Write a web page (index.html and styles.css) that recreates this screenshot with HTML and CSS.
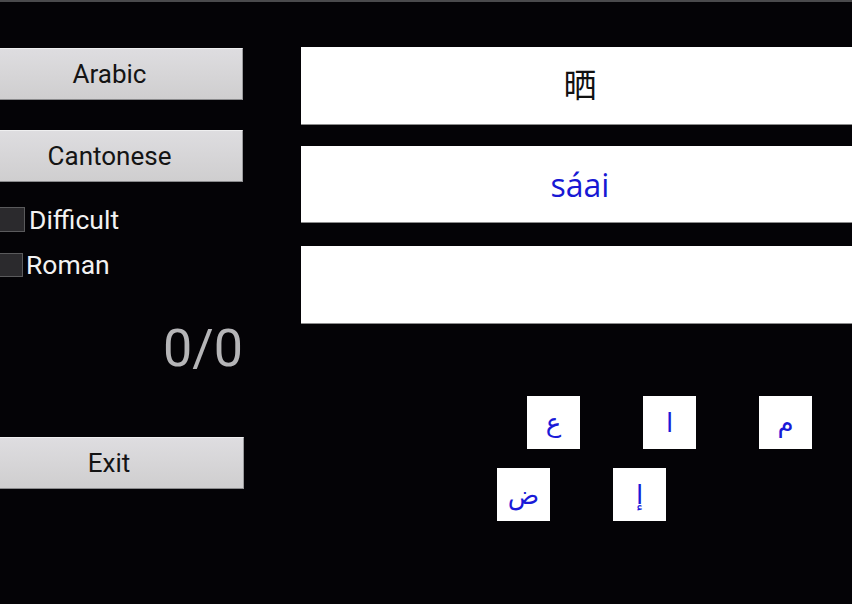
FILE: index.html
```html
<!DOCTYPE html>
<html>
<head>
<meta charset="utf-8">
<link rel="stylesheet" href="styles.css">
</head>
<body>
<div class="app">
  <div class="left">
    <div class="btn btn-arabic">Arabic</div>
    <div class="btn btn-canto">Cantonese</div>
    <div class="check check-diff"><span class="box"></span><span class="label">Difficult</span></div>
    <div class="check check-roman"><span class="box box-small"></span><span class="label">Roman</span></div>
    <div class="score">0/0</div>
    <div class="btn btn-exit">Exit</div>
  </div>
  <div class="right">
    <div class="card card-1"><span class="hanzi">晒</span></div>
    <div class="card card-2"><span class="roman">sáai</span></div>
    <div class="card card-3"></div>
    <div class="tiles">
      <div class="tile-row row-1">
        <div class="tile" dir="rtl">ع</div>
        <div class="tile" dir="rtl">ا</div>
        <div class="tile" dir="rtl">م</div>
      </div>
      <div class="tile-row row-2">
        <div class="tile" dir="rtl">ض</div>
        <div class="tile" dir="rtl">إ</div>
      </div>
    </div>
  </div>
</div>
</body>
</html>
```
FILE: styles.css
```css
html, body {
  margin: 0;
  padding: 0;
  background: #040306;
  width: 852px;
  height: 604px;
  overflow: hidden;
}
.app {
  display: flex;
  border-top: 2px solid #4a4a4c;
  height: 602px;
  font-family: Roboto, "Liberation Sans", sans-serif;
}
.left {
  width: 244px;
  display: flex;
  flex-direction: column;
}
.btn {
  box-sizing: border-box;
  height: 52px;
  margin-left: -23px;
  background: linear-gradient(#dedde0, #cfcecf);
  border-top: 1px solid #efeff0;
  border-bottom: 1px solid #8a8a8c;
  border-right: 1px solid #9a9a9c;
  color: #141414;
  font-size: 26px;
  display: flex;
  align-items: center;
  justify-content: center;
}
.btn-arabic { margin-top: 46px; width: 266px; }
.btn-canto { margin-top: 30px; width: 266px; }
.btn-exit { margin-top: 46px; width: 269px; margin-left: -25px; }
.check {
  display: flex;
  align-items: center;
  color: #f2f2f2;
  font-size: 26.5px;
}
.check-diff { margin-top: 25px; height: 25px; }
.check-roman { margin-top: 20px; height: 25px; }
.box {
  box-sizing: border-box;
  width: 25px;
  height: 25px;
  background: #2b2a2d;
  border: 1px solid #5a5a5c;
  border-left: none;
  margin-right: 4px;
}
.box-small { width: 23px; height: 24px; margin-right: 3px; }
.score {
  margin-top: 42px;
  height: 72px;
  text-align: right;
  color: #b5b5b7;
  font-size: 52px;
  line-height: 60px;
  padding-right: 1px;
}
.right {
  margin-left: 57px;
  margin-right: -7px;
  flex: 1;
  display: flex;
  flex-direction: column;
}
.card {
  background: #ffffff;
  border-bottom: 1px solid #8c8c8c;
  display: flex;
  align-items: center;
  justify-content: center;
}
.card-1 { margin-top: 45px; height: 77px; }
.card-2 { margin-top: 21px; height: 76px; }
.card-3 { margin-top: 23px; height: 77px; }
.hanzi {
  font-family: "Noto Sans CJK SC", "Noto Sans CJK TC", sans-serif;
  font-size: 33px;
  color: #111;
  margin-top: -5px;
}
.roman {
  font-family: "Open Sans", Roboto, sans-serif;
  font-size: 32px;
  color: #1818d4;
}
.tiles {
  margin-top: 72px;
  display: flex;
  flex-direction: column;
  gap: 19px;
}
.tile-row {
  display: flex;
  gap: 63px;
}
.row-1 { padding-left: 226px; }
.row-2 { padding-left: 196px; }
.tile {
  width: 53px;
  height: 53px;
  background: #fff;
  color: #1a1ad8;
  font-family: "DejaVu Sans", sans-serif;
  font-size: 26px;
  display: flex;
  align-items: center;
  justify-content: center;
}
```
